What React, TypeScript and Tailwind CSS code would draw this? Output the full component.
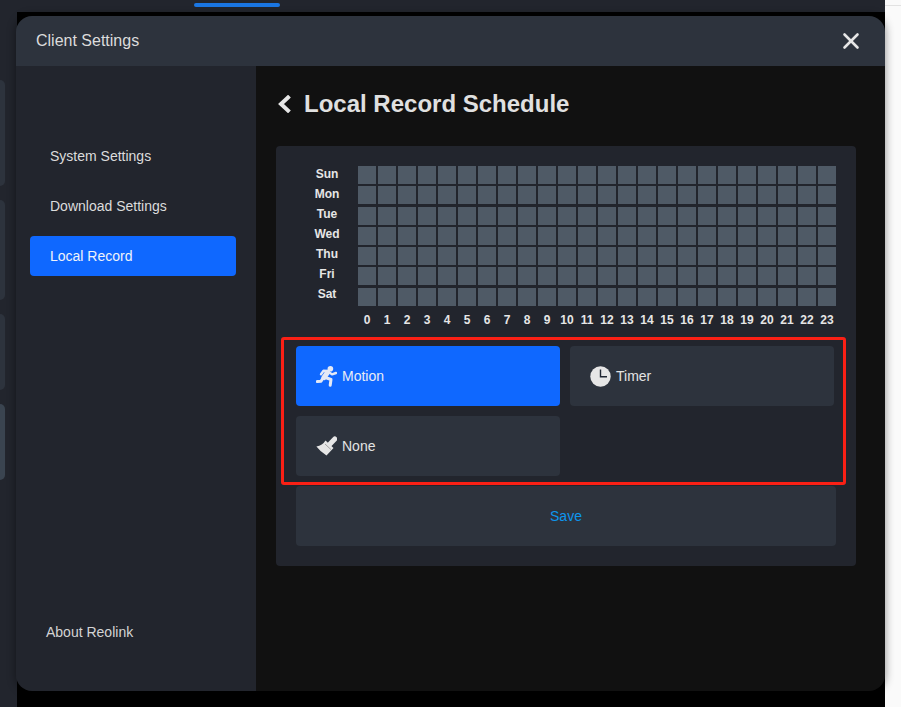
import { X } from "lucide-react";

const days = ["Sun", "Mon", "Tue", "Wed", "Thu", "Fri", "Sat"];
const hours = Array.from({ length: 24 }, (_, i) => i);

function ClockIcon() {
  return (
    <svg width="21" height="21" viewBox="0 0 21 21" className="shrink-0">
      <circle cx="10.5" cy="10.5" r="10.2" fill="#e6e6e6" />
      <path d="M10.5 3.5V10.8H17" fill="none" stroke="#1f2733" strokeWidth="1.4" />
    </svg>
  );
}

function RunIcon() {
  return (
    <svg width="21" height="21" viewBox="0 0 21 21" className="shrink-0" fill="none" stroke="#e4e9f5" strokeLinecap="round" strokeLinejoin="round">
      <circle cx="14.4" cy="2.8" r="2.8" fill="#e4e9f5" stroke="none" />
      <path d="M11.5 6.5L8 11.5" strokeWidth="5" />
      <path d="M12 5.5L16 8.4L20 7" strokeWidth="2.4" />
      <path d="M12 5L7.5 4.8L5 8.2" strokeWidth="2.4" />
      <path d="M7 12L5 15.2L1.4 15.6" strokeWidth="3" />
      <path d="M8 11L15 13.5L14.2 19.2" strokeWidth="3" />
    </svg>
  );
}

function BrushIcon() {
  return (
    <svg width="21" height="20" viewBox="0 0 21 20" className="shrink-0">
      <path d="M14 8L18.8 3" stroke="#e6e6e6" strokeWidth="5" strokeLinecap="round" />
      <path d="M9.5 4.5L17.5 12L10.5 19.6Q4.5 16 0.4 10.6Q6.5 9.5 9.5 4.5Z" fill="#e6e6e6" />
      <path d="M9 8L15 13.6" stroke="#8f8f8f" strokeWidth="0.8" />
    </svg>
  );
}

function ModeButton({ label, icon, active }: { label: string; icon: React.ReactNode; active?: boolean }) {
  return (
    <div className={`flex h-[60px] items-center gap-[5px] rounded pl-5 text-sm ${active ? "bg-[#0f68ff] text-[#e8ecf5]" : "bg-[#2d333d] text-[#e3e3e3]"}`}>
      <span className="flex w-[21px] justify-center">{icon}</span>
      <span>{label}</span>
    </div>
  );
}

export default function App() {
  return (
    <div className="relative flex h-[707px] w-[901px] overflow-hidden bg-[#fafafa] font-['Liberation_Sans',Arial,sans-serif]">
      <div className="flex h-full w-[885px] flex-col bg-black">
        <div className="flex h-3 shrink-0 bg-[#22252d] pl-[194px] pt-[3px]">
          <div className="h-1 w-[86px] rounded-sm bg-[#1a76e3]" />
        </div>
        <div className="flex h-full w-[17px] flex-col gap-[14px] bg-[#22252d] pt-[68px]">
          <div className="h-[106px] w-[5px] rounded-r-lg bg-[#2d333d]" />
          <div className="h-[100px] w-[5px] rounded-r-lg bg-[#2d333d]" />
          <div className="h-[76px] w-[5px] rounded-r-lg bg-[#2d333d]" />
          <div className="h-[76px] w-[5px] rounded-r-lg bg-[#3a4450]" />
        </div>
      </div>
      <div className="flex-1 bg-[#fafafa]">
        <div className="mt-[5px] h-px bg-[#e2e2e2]" />
      </div>

      <div className="absolute left-4 top-4 flex h-[675px] w-[869px] flex-col overflow-hidden rounded-2xl shadow-[0_0_10px_rgba(0,0,0,0.45)]">
        <div className="flex h-[50px] shrink-0 items-center justify-between bg-[#2d333d] pl-5 pr-[21px]">
          <span className="text-base text-[#dcdcdc]">Client Settings</span>
          <X size={26} strokeWidth={2.4} className="text-[#e6e6e6]" />
        </div>
        <div className="flex min-h-0 flex-1">
          <div className="flex w-60 shrink-0 flex-col justify-between bg-[#22252d] pb-[39px] pl-[14px] pr-5 pt-[70px] text-sm">
            <div className="flex flex-col gap-[10px]">
              <div className="flex h-10 items-center rounded pl-5 text-[#dcdcdc]">System Settings</div>
              <div className="flex h-10 items-center rounded pl-5 text-[#dcdcdc]">Download Settings</div>
              <div className="flex h-10 items-center rounded bg-[#0f68ff] pl-5 text-[#f0f3fa]">Local Record</div>
            </div>
            <div className="flex h-10 items-center pl-4 text-[#d4d4d4]">About Reolink</div>
          </div>
          <div className="flex min-w-0 flex-1 flex-col bg-[#111111] pl-5 pr-[29px]">
            <div className="flex h-20 shrink-0 items-center gap-[12px] pb-1">
              <svg width="16" height="18" viewBox="0 0 16 18" fill="none" className="shrink-0">
                <path d="M12 2.5L5 9L12 15.5" stroke="#e6e6e6" strokeWidth="4" strokeLinecap="square" />
              </svg>
              <span className="text-2xl font-bold text-[#e0e0e0]">Local Record Schedule</span>
            </div>
            <div className="flex h-[420px] flex-col rounded bg-[#22252d] pl-5 pr-5 pt-5">
              <div className="flex">
                <div className="flex w-[62px] shrink-0 flex-col gap-0">
                  {days.map((d) => (
                    <div key={d} className="flex h-5 items-center justify-center pb-1 text-xs font-bold text-[#e6e6e6]">{d}</div>
                  ))}
                </div>
                <div className="grid grid-cols-[repeat(24,18px)] gap-0.5">
                  {days.flatMap((d) =>
                    hours.map((h) => <div key={d + h} className="h-[18px] w-[18px] bg-[#4f5a66]" />)
                  )}
                </div>
              </div>
              <div className="ml-[62px] mt-[2px] grid h-[23px] grid-cols-[repeat(24,20px)] items-center">
                {hours.map((h) => (
                  <div key={h} className="w-[18px] text-center text-xs font-bold text-[#e6e6e6]">{h}</div>
                ))}
              </div>
              <div className="relative mt-[15px] grid grid-cols-[264px_264px] gap-[10px]">
                <ModeButton label="Motion" active icon={<RunIcon />} />
                <ModeButton label="Timer" icon={<ClockIcon />} />
                <ModeButton label="None" icon={<BrushIcon />} />
                <div className="absolute -left-[15px] -top-[9px] h-[148px] w-[565px] rounded-[3px] border-[3px] border-[#fa2015]" />
              </div>
              <div className="mt-[10px] flex h-[60px] items-center justify-center rounded bg-[#2d333d] text-sm text-[#0d96ee]">Save</div>
            </div>
          </div>
        </div>
      </div>
    </div>
  );
}
